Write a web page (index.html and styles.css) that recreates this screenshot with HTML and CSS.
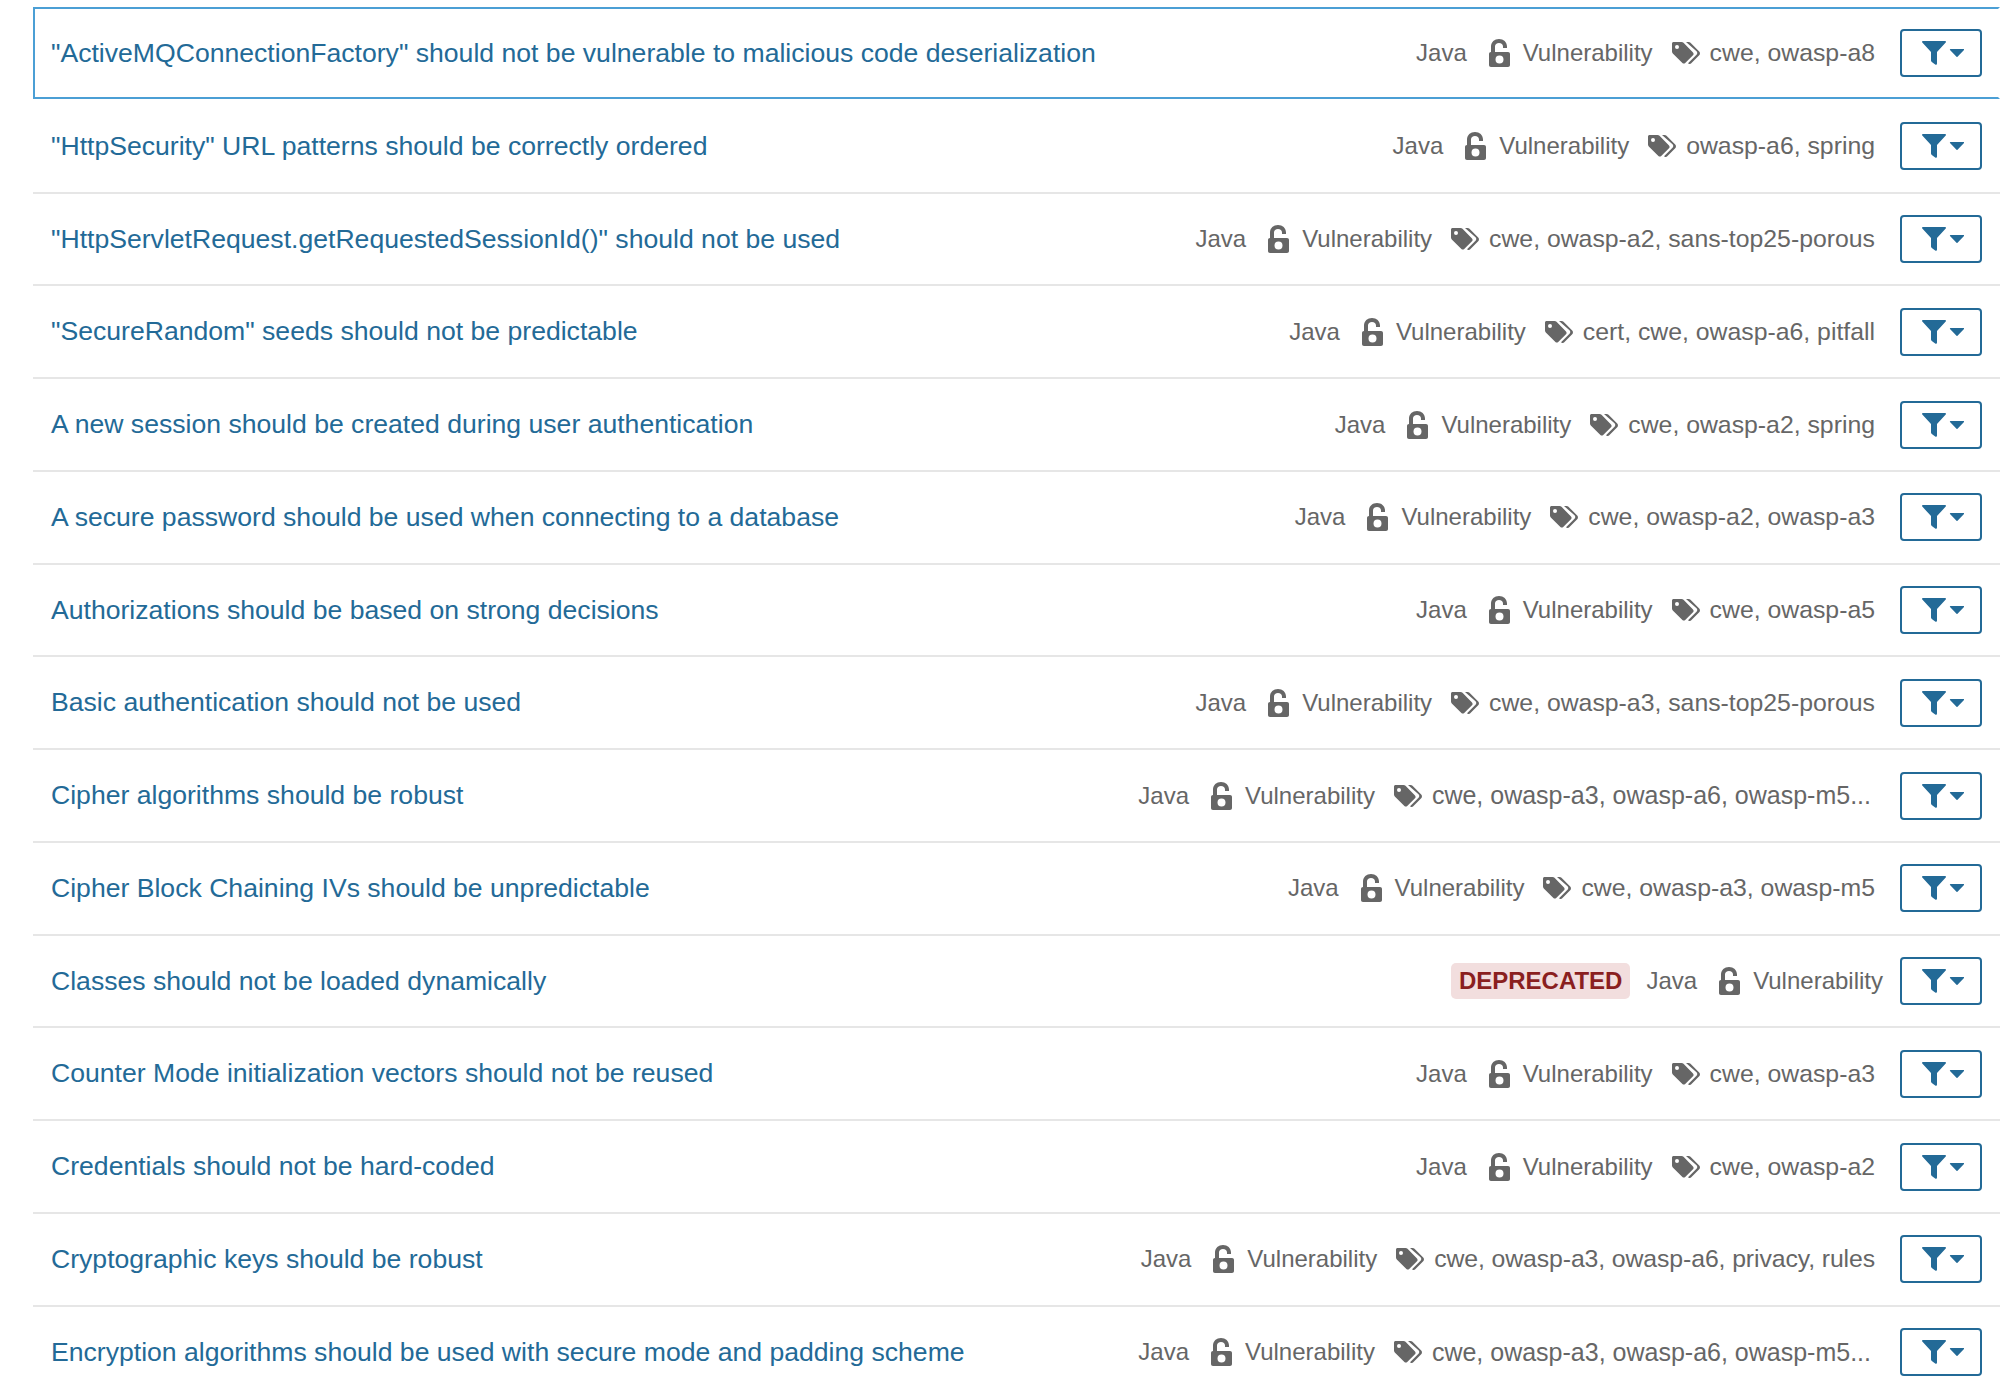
FILE: index.html
```html
<!DOCTYPE html>
<html lang="en">
<head>
  <meta charset="UTF-8">
  <title>Rules</title>
  <link rel="stylesheet" href="styles.css">
</head>
<body>
  <svg class="icon-defs" width="0" height="0">
    <symbol id="lock" viewBox="0 0 21 28">
      <path fill-rule="evenodd" d="M2 13V7.500C2 3 5.500 0 10 0c4.500 0 8 3 8 7.500V9h-4V7.500C14 5.500 12.300 4 10 4S6 5.500 6 7.500V13h13c1.200 0 2 .8 2 2v11c0 1.200-.8 2-2 2H2c-1.200 0-2-.8-2-2V15c0-1.200.8-2 2-2zm8.500 3.500a4 4 0 1 0 0 8 4 4 0 0 0 0-8z"/>
    </symbol>
    <symbol id="tags" viewBox="0 0 28 22">
      <path d="M1.500 0h8c.8 0 1.500.3 2 .8l9.500 9.600c.8.800.8 2 0 2.800l-7.800 7.800c-.8.800-2 .8-2.800 0L.8 11.500C.3 11 0 10.300 0 9.500v-8C0 .7.700 0 1.500 0zM5 3a2 2 0 1 0 0 4 2 2 0 0 0 0-4z" fill-rule="evenodd"/>
      <path d="M14 0h2.500c.8 0 1.500.3 2 .8l8.700 8.800c1 1 1 2.700 0 3.700L19 21.500c-.8.700-2 .7-2.700 0l-.3-.3 8.500-8.500c1-1 1-2.400 0-3.400L14 0z"/>
    </symbol>
    <symbol id="filter" viewBox="0 0 42 24">
      <path d="M1 0h22c1 0 1.300.9.700 1.600L15 11v11.500c0 1-.9 1.800-1.800 1.100L9.800 21c-.5-.4-.8-.9-.8-1.500V11L.3 1.600C-.3.900 0 0 1 0z"/>
      <path d="M28.500 8h13c.6 0 .8.500.5.900l-6.500 6.900c-.3.300-.7.300-1 0L28 8.900c-.3-.4-.1-.9.500-.9z"/>
    </symbol>
  </svg>

  <ul class="rule-list">
    <li class="rule selected">
      <a class="rule-name" href="#">"ActiveMQConnectionFactory" should not be vulnerable to malicious code deserialization</a>
      <span class="rule-lang">Java</span>
      <span class="rule-type"><svg class="lock-icon"><use href="#lock"/></svg>Vulnerability</span>
      <span class="rule-tags"><svg class="tags-icon"><use href="#tags"/></svg>cwe, owasp-a8</span>
      <button class="filter-btn"><svg class="filter-icon"><use href="#filter"/></svg></button>
    </li>
    <li class="rule">
      <a class="rule-name" href="#">"HttpSecurity" URL patterns should be correctly ordered</a>
      <span class="rule-lang">Java</span>
      <span class="rule-type"><svg class="lock-icon"><use href="#lock"/></svg>Vulnerability</span>
      <span class="rule-tags"><svg class="tags-icon"><use href="#tags"/></svg>owasp-a6, spring</span>
      <button class="filter-btn"><svg class="filter-icon"><use href="#filter"/></svg></button>
    </li>
    <li class="rule">
      <a class="rule-name" href="#">"HttpServletRequest.getRequestedSessionId()" should not be used</a>
      <span class="rule-lang">Java</span>
      <span class="rule-type"><svg class="lock-icon"><use href="#lock"/></svg>Vulnerability</span>
      <span class="rule-tags"><svg class="tags-icon"><use href="#tags"/></svg>cwe, owasp-a2, sans-top25-porous</span>
      <button class="filter-btn"><svg class="filter-icon"><use href="#filter"/></svg></button>
    </li>
    <li class="rule">
      <a class="rule-name" href="#">"SecureRandom" seeds should not be predictable</a>
      <span class="rule-lang">Java</span>
      <span class="rule-type"><svg class="lock-icon"><use href="#lock"/></svg>Vulnerability</span>
      <span class="rule-tags"><svg class="tags-icon"><use href="#tags"/></svg>cert, cwe, owasp-a6, pitfall</span>
      <button class="filter-btn"><svg class="filter-icon"><use href="#filter"/></svg></button>
    </li>
    <li class="rule">
      <a class="rule-name" href="#">A new session should be created during user authentication</a>
      <span class="rule-lang">Java</span>
      <span class="rule-type"><svg class="lock-icon"><use href="#lock"/></svg>Vulnerability</span>
      <span class="rule-tags"><svg class="tags-icon"><use href="#tags"/></svg>cwe, owasp-a2, spring</span>
      <button class="filter-btn"><svg class="filter-icon"><use href="#filter"/></svg></button>
    </li>
    <li class="rule">
      <a class="rule-name" href="#">A secure password should be used when connecting to a database</a>
      <span class="rule-lang">Java</span>
      <span class="rule-type"><svg class="lock-icon"><use href="#lock"/></svg>Vulnerability</span>
      <span class="rule-tags"><svg class="tags-icon"><use href="#tags"/></svg>cwe, owasp-a2, owasp-a3</span>
      <button class="filter-btn"><svg class="filter-icon"><use href="#filter"/></svg></button>
    </li>
    <li class="rule">
      <a class="rule-name" href="#">Authorizations should be based on strong decisions</a>
      <span class="rule-lang">Java</span>
      <span class="rule-type"><svg class="lock-icon"><use href="#lock"/></svg>Vulnerability</span>
      <span class="rule-tags"><svg class="tags-icon"><use href="#tags"/></svg>cwe, owasp-a5</span>
      <button class="filter-btn"><svg class="filter-icon"><use href="#filter"/></svg></button>
    </li>
    <li class="rule">
      <a class="rule-name" href="#">Basic authentication should not be used</a>
      <span class="rule-lang">Java</span>
      <span class="rule-type"><svg class="lock-icon"><use href="#lock"/></svg>Vulnerability</span>
      <span class="rule-tags"><svg class="tags-icon"><use href="#tags"/></svg>cwe, owasp-a3, sans-top25-porous</span>
      <button class="filter-btn"><svg class="filter-icon"><use href="#filter"/></svg></button>
    </li>
    <li class="rule">
      <a class="rule-name" href="#">Cipher algorithms should be robust</a>
      <span class="rule-lang">Java</span>
      <span class="rule-type"><svg class="lock-icon"><use href="#lock"/></svg>Vulnerability</span>
      <span class="rule-tags truncated"><svg class="tags-icon"><use href="#tags"/></svg>cwe, owasp-a3, owasp-a6, owasp-m5...</span>
      <button class="filter-btn"><svg class="filter-icon"><use href="#filter"/></svg></button>
    </li>
    <li class="rule">
      <a class="rule-name" href="#">Cipher Block Chaining IVs should be unpredictable</a>
      <span class="rule-lang">Java</span>
      <span class="rule-type"><svg class="lock-icon"><use href="#lock"/></svg>Vulnerability</span>
      <span class="rule-tags"><svg class="tags-icon"><use href="#tags"/></svg>cwe, owasp-a3, owasp-m5</span>
      <button class="filter-btn"><svg class="filter-icon"><use href="#filter"/></svg></button>
    </li>
    <li class="rule">
      <a class="rule-name" href="#">Classes should not be loaded dynamically</a>
      <span class="badge">DEPRECATED</span>
      <span class="rule-lang">Java</span>
      <span class="rule-type no-tags"><svg class="lock-icon"><use href="#lock"/></svg>Vulnerability</span>
      <button class="filter-btn"><svg class="filter-icon"><use href="#filter"/></svg></button>
    </li>
    <li class="rule">
      <a class="rule-name" href="#">Counter Mode initialization vectors should not be reused</a>
      <span class="rule-lang">Java</span>
      <span class="rule-type"><svg class="lock-icon"><use href="#lock"/></svg>Vulnerability</span>
      <span class="rule-tags"><svg class="tags-icon"><use href="#tags"/></svg>cwe, owasp-a3</span>
      <button class="filter-btn"><svg class="filter-icon"><use href="#filter"/></svg></button>
    </li>
    <li class="rule">
      <a class="rule-name" href="#">Credentials should not be hard-coded</a>
      <span class="rule-lang">Java</span>
      <span class="rule-type"><svg class="lock-icon"><use href="#lock"/></svg>Vulnerability</span>
      <span class="rule-tags"><svg class="tags-icon"><use href="#tags"/></svg>cwe, owasp-a2</span>
      <button class="filter-btn"><svg class="filter-icon"><use href="#filter"/></svg></button>
    </li>
    <li class="rule">
      <a class="rule-name" href="#">Cryptographic keys should be robust</a>
      <span class="rule-lang">Java</span>
      <span class="rule-type"><svg class="lock-icon"><use href="#lock"/></svg>Vulnerability</span>
      <span class="rule-tags tight"><svg class="tags-icon"><use href="#tags"/></svg>cwe, owasp-a3, owasp-a6, privacy, rules</span>
      <button class="filter-btn"><svg class="filter-icon"><use href="#filter"/></svg></button>
    </li>
    <li class="rule">
      <a class="rule-name" href="#">Encryption algorithms should be used with secure mode and padding scheme</a>
      <span class="rule-lang">Java</span>
      <span class="rule-type"><svg class="lock-icon"><use href="#lock"/></svg>Vulnerability</span>
      <span class="rule-tags truncated"><svg class="tags-icon"><use href="#tags"/></svg>cwe, owasp-a3, owasp-a6, owasp-m5...</span>
      <button class="filter-btn"><svg class="filter-icon"><use href="#filter"/></svg></button>
    </li>
  </ul>
</body>
</html>
```
FILE: styles.css
```css
body {
  margin: 0;
  height: 1389px;
  overflow: hidden;
  background-color: #fff;
  font-family: "Liberation Sans", Arial, sans-serif;
}

.icon-defs {
  position: absolute;
}

.rule-list {
  list-style: none;
  margin: 0;
  padding: 7px 0 0 33px;
}

.rule {
  display: flex;
  align-items: center;
  box-sizing: border-box;
  height: 92.75px;
  padding: 0 18px 2px;
  border-top: 2px solid transparent;
  border-bottom: 2px solid #e6e6e6;
  font-size: 24px;
  color: #666;
}

.rule.selected {
  height: 92.3px;
  margin-bottom: 1.6px;
  padding: 0 16px;
  border: 2px solid #4b9fd5;
  border-right-color: transparent;
}

.rule-name {
  flex: 1;
  font-size: 26.6px;
  color: #236a97;
  text-decoration: none;
}

.badge {
  margin-right: 16px;
  padding: 4px 8px;
  border-radius: 5px;
  background-color: #f2dede;
  color: #8a1f1f;
  font-weight: bold;
}

.rule-lang {
  margin-right: 22px;
}

.rule-type {
  display: flex;
  align-items: center;
  margin-right: 19px;
}

.rule-type.no-tags {
  margin-right: 17px;
}

.lock-icon {
  width: 21px;
  height: 28px;
  margin-right: 13px;
  fill: #666;
}

.rule-tags {
  display: flex;
  align-items: center;
  margin-right: 25px;
  font-size: 24.8px;
}

.rule-tags.truncated {
  margin-right: 29px;
  font-size: 25px;
}

.rule-tags.tight {
  letter-spacing: -0.1px;
}

.tags-icon {
  width: 28px;
  height: 22px;
  margin-right: 10px;
  fill: #666;
}

.filter-btn {
  display: flex;
  align-items: center;
  justify-content: center;
  width: 82px;
  height: 48px;
  padding: 0;
  background-color: #fff;
  border: 2px solid #236a97;
  border-radius: 4px;
}

.filter-icon {
  width: 42px;
  height: 24px;
  margin-left: 4px;
  fill: #236a97;
}
```
